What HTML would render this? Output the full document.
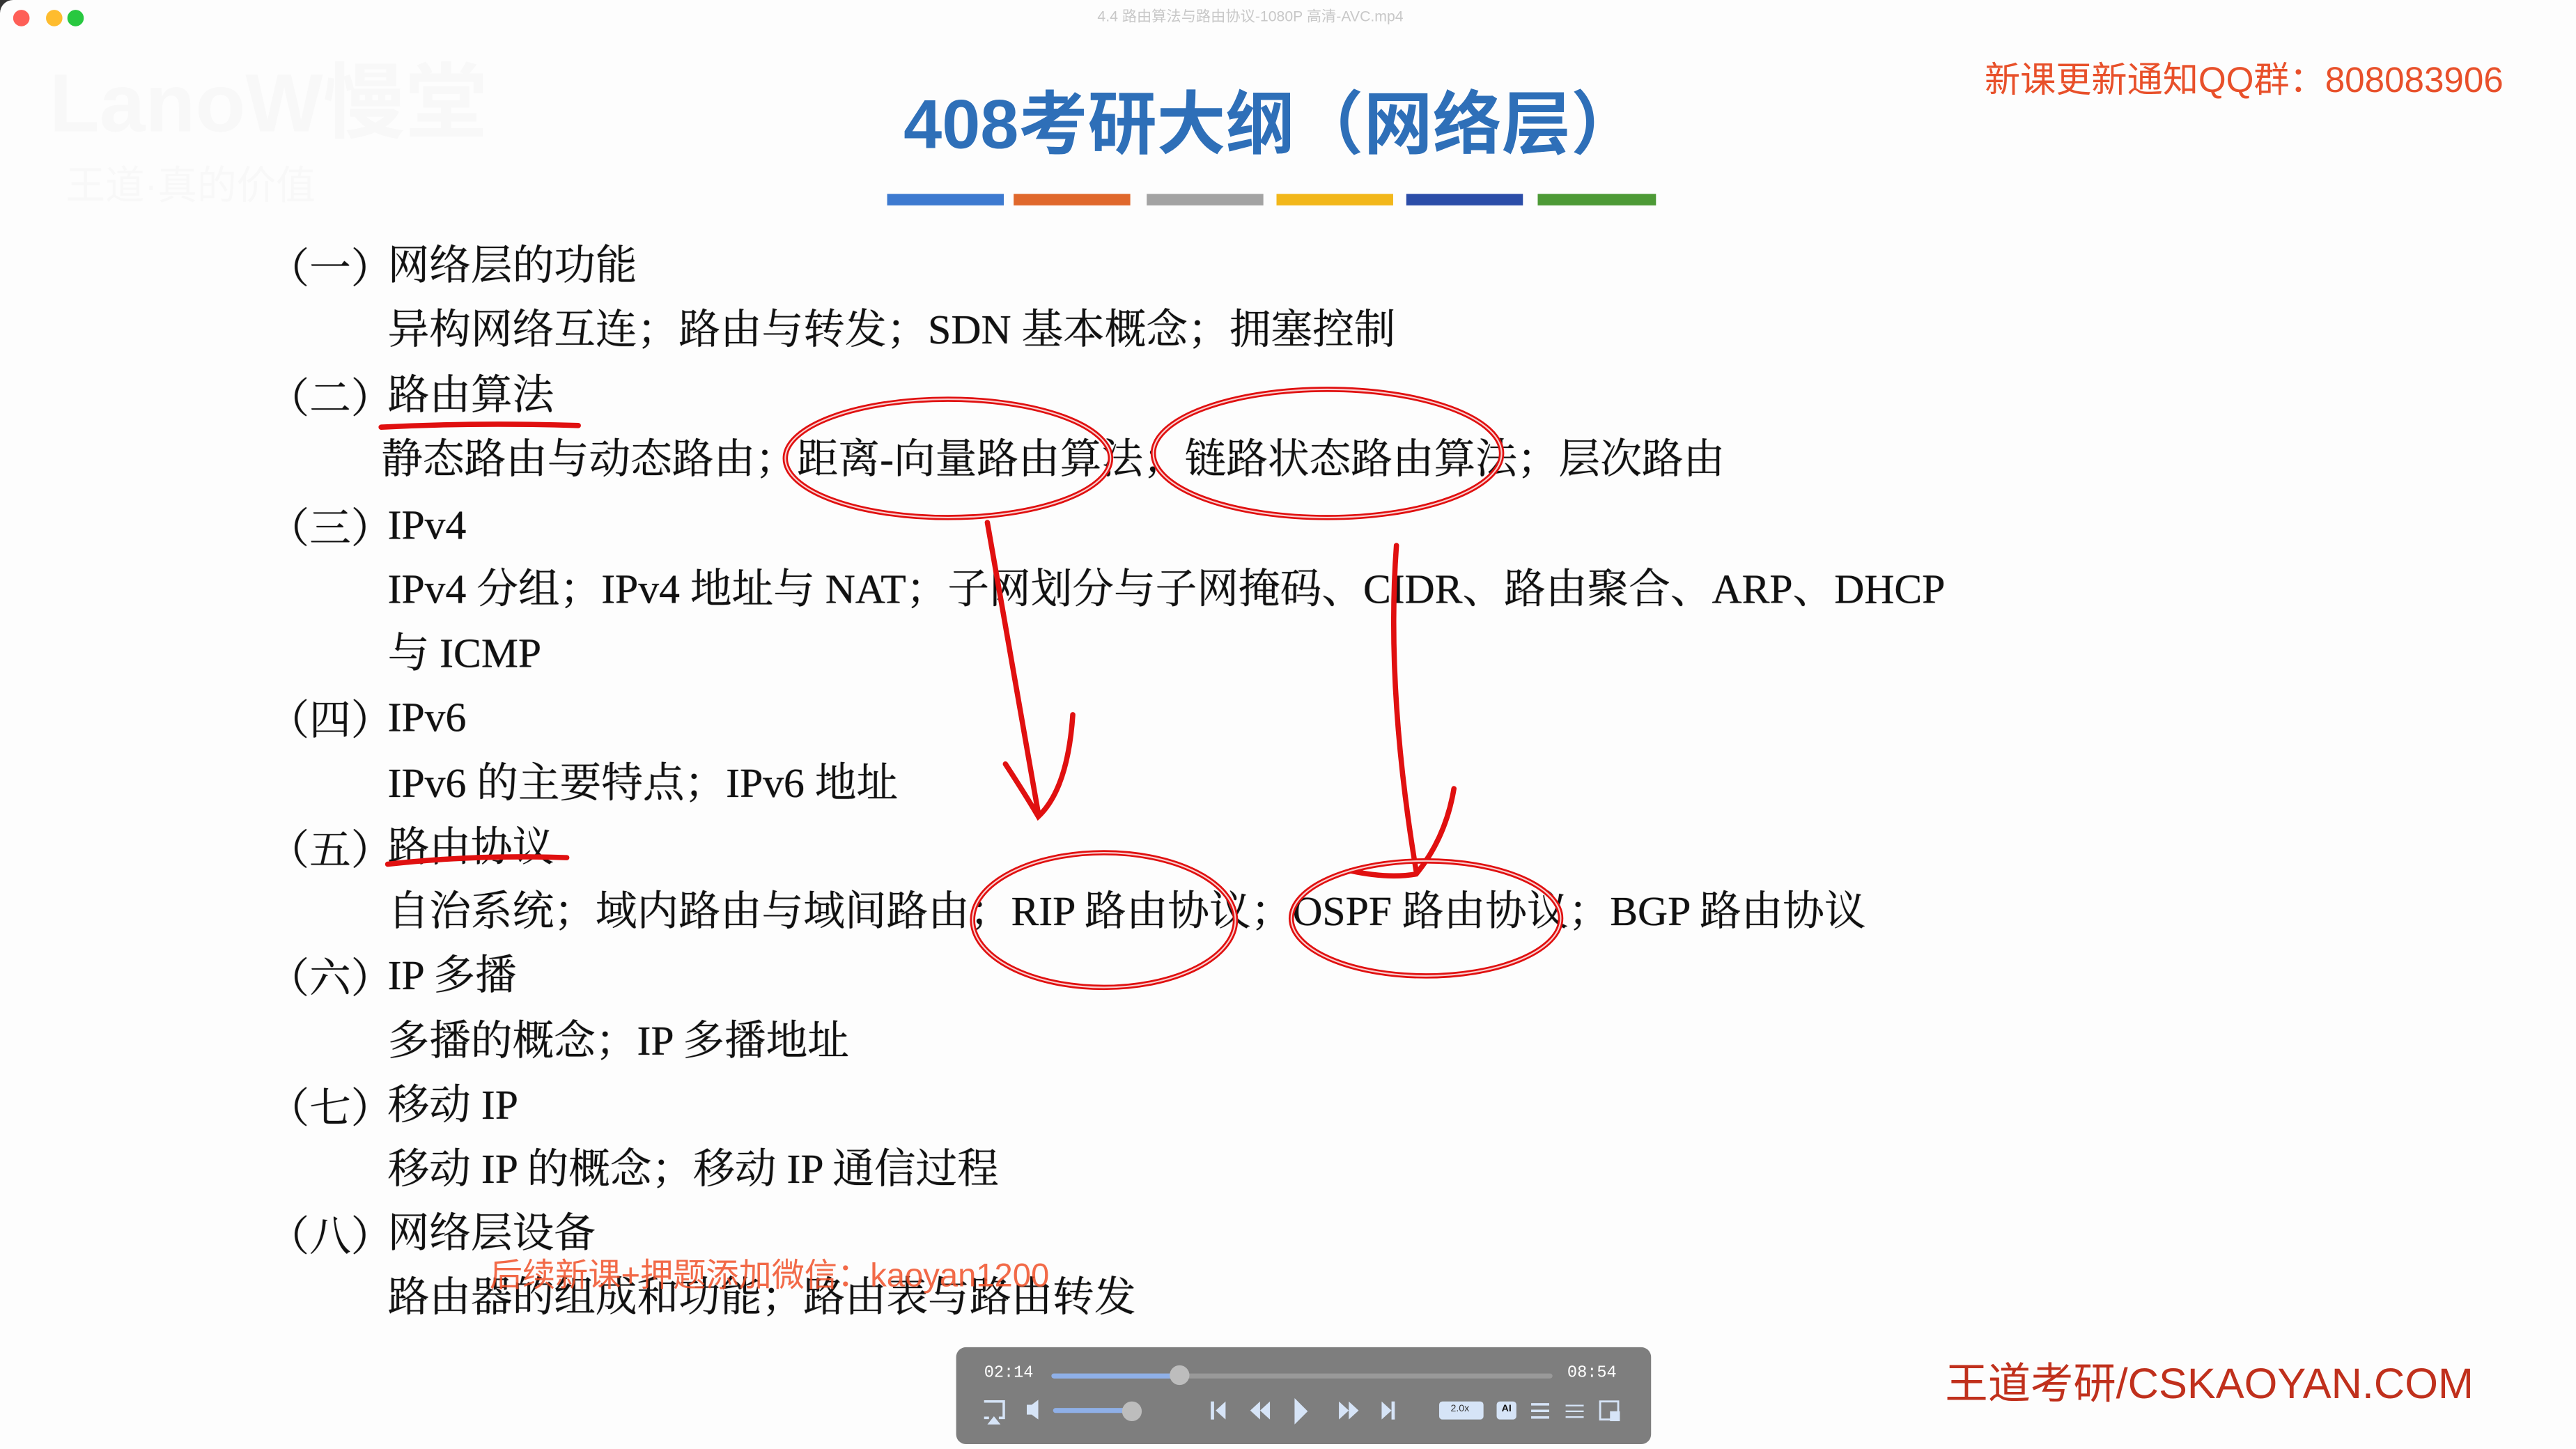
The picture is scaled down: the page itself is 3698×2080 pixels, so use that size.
<!DOCTYPE html>
<html><head><meta charset="utf-8"><style>
html,body{margin:0;padding:0;background:#fff;overflow:hidden;width:3698px;height:2080px}
#w{position:absolute;left:0;top:0;width:1568px;height:882px;transform:scale(2.35842);transform-origin:0 0;background:#fdfdfd}
.t{position:absolute;white-space:nowrap;font-family:"Liberation Serif","Noto Serif CJK SC",serif;font-size:25.3px;color:#111;line-height:1;text-shadow:0 0 0.4px #111;text-spacing-trim:space-all}
.s{font-family:"Liberation Sans","Noto Sans CJK SC",sans-serif;text-shadow:none}
.p{font-family:"Noto Serif CJK SC",serif;text-spacing-trim:space-all;font-feature-settings:"fwid" 1}
.bar{position:absolute;top:118px;height:7px}
</style></head><body><div id="w">
<div style="position:absolute;left:0;top:0;width:8px;height:8px;background:#333"></div>
<div style="position:absolute;left:0;top:0;width:1568px;height:882px;border-radius:8px 8px 0 0;background:#fdfdfd"></div>
<div style="position:absolute;left:8px;top:6px;width:10px;height:10px;border-radius:50%;background:#fe5f57"></div>
<div style="position:absolute;left:28px;top:6px;width:10px;height:10px;border-radius:50%;background:#febc2e"></div>
<div style="position:absolute;left:41px;top:6px;width:10px;height:10px;border-radius:50%;background:#28c840"></div>
<div class="t s" style="left:668px;top:6px;font-size:9px;color:#c8c8c8">4.4 路由算法与路由协议-1080P 高清-AVC.mp4</div>
<div class="t s" style="left:30px;top:38px;font-size:50px;color:#f8f8f8;font-weight:bold">LanoW慢堂</div>
<div class="t s" style="left:40px;top:102px;font-size:24px;color:#f8f8f8">王道·真的价值</div>
<div class="t s" style="left:1208px;top:38px;font-size:21.7px;color:#e8502a">新课更新通知QQ群：808083906</div>
<div class="t s" style="left:550px;top:55px;font-size:42px;color:#2e6fb8;font-weight:bold">408考研大纲（网络层）</div>
<div class="bar" style="left:540px;width:71px;background:#3d7ad0"></div>
<div class="bar" style="left:617px;width:71px;background:#e0682c"></div>
<div class="bar" style="left:698px;width:71px;background:#a3a3a3"></div>
<div class="bar" style="left:777px;width:71px;background:#f2b71a"></div>
<div class="bar" style="left:856px;width:71px;background:#2b4da8"></div>
<div class="bar" style="left:936px;width:72px;background:#4d9a36"></div>
<div class="t p" style="left:163px;top:150px">（一）</div><div class="t" style="left:236px;top:150px">网络层的功能</div>
<div class="t" style="left:236px;top:189px">异构网络互连；路由与转发；SDN 基本概念；拥塞控制</div>
<div class="t p" style="left:163px;top:229px">（二）</div><div class="t" style="left:236px;top:229px">路由算法</div>
<div class="t" style="left:232px;top:268px">静态路由与动态路由；距离-向量路由算法；链路状态路由算法；层次路由</div>
<div class="t p" style="left:163px;top:308px">（三）</div><div class="t" style="left:236px;top:308px">IPv4</div>
<div class="t" style="left:236px;top:347px">IPv4 分组；IPv4 地址与 NAT；子网划分与子网掩码、CIDR、路由聚合、ARP、DHCP</div>
<div class="t" style="left:236px;top:386px">与 ICMP</div>
<div class="t p" style="left:163px;top:425px">（四）</div><div class="t" style="left:236px;top:425px">IPv6</div>
<div class="t" style="left:236px;top:465px">IPv6 的主要特点；IPv6 地址</div>
<div class="t p" style="left:163px;top:504px">（五）</div><div class="t" style="left:236px;top:504px">路由协议</div>
<div class="t" style="left:236px;top:543px">自治系统；域内路由与域间路由；RIP 路由协议；OSPF 路由协议；BGP 路由协议</div>
<div class="t p" style="left:163px;top:582px">（六）</div><div class="t" style="left:236px;top:582px">IP 多播</div>
<div class="t" style="left:236px;top:622px">多播的概念；IP 多播地址</div>
<div class="t p" style="left:163px;top:661px">（七）</div><div class="t" style="left:236px;top:661px">移动 IP</div>
<div class="t" style="left:236px;top:700px">移动 IP 的概念；移动 IP 通信过程</div>
<div class="t p" style="left:163px;top:739px">（八）</div><div class="t" style="left:236px;top:739px">网络层设备</div>
<div class="t" style="left:236px;top:778px">路由器的组成和功能；路由表与路由转发</div>
<div class="t s" style="left:298px;top:767px;font-size:20px;color:rgba(240,80,40,0.85)">后续新课+押题添加微信：kaoyan1200</div>
<div class="t s" style="left:1184px;top:829px;font-size:26px;color:#c0301c">王道考研/CSKAOYAN.COM</div>
<svg style="position:absolute;left:0;top:0" width="1568" height="882" fill="none" stroke-linecap="round">
<g stroke="#e01010" stroke-width="3.2">
<path d="M232 260 Q290 257 352 259"/>
<path d="M236 526 Q290 520 345 522"/>
<ellipse cx="577" cy="279" rx="99" ry="36"/>
<ellipse cx="808" cy="276" rx="106" ry="39"/>
<path d="M601 318 C612 380 622 440 632 495 M612 465 Q625 485 632 497 Q650 480 653 435"/>
<path d="M850 332 C845 400 852 470 862 530 M822 530 Q845 535 862 532 Q880 510 885 480"/>
<ellipse cx="672" cy="560" rx="80" ry="41"/>
<ellipse cx="868" cy="559" rx="82" ry="35"/>
</g>
<g stroke="#fff" stroke-width="0.9" opacity="0.8">
<ellipse cx="577" cy="279" rx="99" ry="36"/>
<ellipse cx="808" cy="276" rx="106" ry="39"/>
<ellipse cx="672" cy="560" rx="80" ry="41"/>
<ellipse cx="868" cy="559" rx="82" ry="35"/>
</g>
</svg>
<div style="position:absolute;left:582px;top:820px;width:423px;height:59px;border-radius:6px;background:#7e7e7e"></div>
<div class="t s" style="left:599px;top:832px;font-size:10px;color:#fff;font-family:'Liberation Mono',monospace">02:14</div>
<div class="t s" style="left:954px;top:832px;font-size:10px;color:#fff;font-family:'Liberation Mono',monospace">08:54</div>
<div style="position:absolute;left:640px;top:836px;width:305px;height:3px;border-radius:2px;background:#999"></div>
<div style="position:absolute;left:640px;top:836px;width:78px;height:3px;border-radius:2px;background:#8fb0e8"></div>
<div style="position:absolute;left:712px;top:831px;width:12px;height:12px;border-radius:50%;background:#bdbdbd"></div>
<div style="position:absolute;left:641px;top:857px;width:48px;height:3px;border-radius:2px;background:#8fb0e8"></div>
<div style="position:absolute;left:683px;top:853px;width:12px;height:12px;border-radius:50%;background:#bdbdbd"></div>
<svg style="position:absolute;left:582px;top:820px" width="423" height="59" fill="#d6e4f7">
<path d="M17 33h12v10h-3M20 43h-3z" stroke="#d6e4f7" fill="none" stroke-width="1.5"/><path d="M19 47l4-5 4 5z"/>
<path d="M43 35h3l4-3v12l-4-3h-3z"/>
<rect x="155" y="33" width="2" height="11"/><path d="M158 38.5l6-5.5v11z"/>
<path d="M179 38.5l6-5.5v11zM185 38.5l6-5.5v11z"/>
<path d="M206 31l8 8-8 8z"/>
<path d="M233 33l6 5.5-6 5.5zM239 33l6 5.5-6 5.5z"/>
<path d="M259 33l6 5.5-6 5.5z"/><rect x="265" y="33" width="2" height="11"/>
<rect x="294" y="33" width="27" height="11" rx="2"/>
<rect x="329" y="33" width="12" height="11" rx="2"/>
<path d="M350 34h11v1.5h-11zM350 38h11v1.5h-11zM350 42h11v1.5h-11z"/>
<path d="M371 35h11v1h-11zM371 38.5h11v1h-11zM371 42h11v1h-11z"/>
<rect x="392" y="33" width="11" height="11" fill="none" stroke="#d6e4f7" stroke-width="1.2"/><rect x="398" y="39" width="6" height="6"/>
</svg>
<div class="t s" style="left:883px;top:855px;font-size:6px;color:#333">2.0x</div>
<div class="t s" style="left:914px;top:855px;font-size:6px;color:#111;font-weight:bold">AI</div>
</div></body></html>
